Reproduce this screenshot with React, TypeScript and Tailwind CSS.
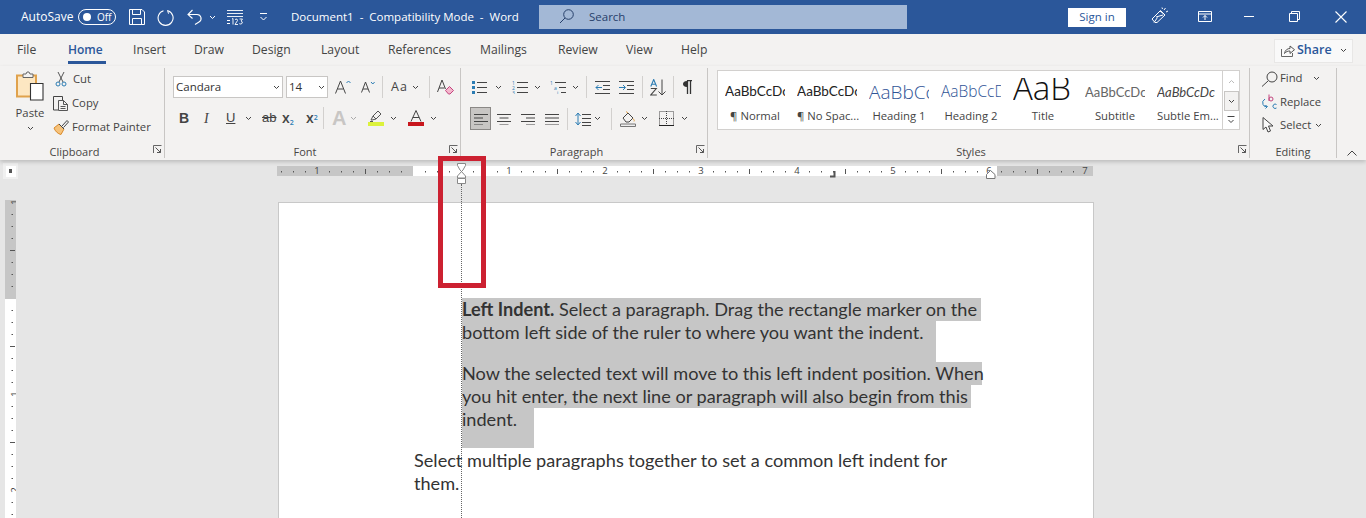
import React from "react";

const ui = "font-['Open_Sans','Noto_Sans',sans-serif]";

function Ico({ w, h, className = "", children }: { w: number; h: number; className?: string; children?: React.ReactNode }) {
  return (
    <svg width={w} height={h} viewBox={`0 0 ${w} ${h}`} fill="none" className={`shrink-0 block ${className}`}>
      {children}
    </svg>
  );
}

function Chev({ className = "", color = "#444" }: { className?: string; color?: string }) {
  return (
    <Ico w={7} h={5} className={className}>
      <path d="M1 1l2.500 2.500L6 1" stroke={color} strokeWidth="1" />
    </Ico>
  );
}

function Sep({ className = "" }: { className?: string }) {
  return <div className={`w-px h-[22px] bg-[#d2d0ce] shrink-0 ${className}`} />;
}

function Launcher() {
  return (
    <div className="w-[15px] flex justify-start pl-[4px] pt-[1px]">
      <Ico w={9} h={9}>
        <path d="M0.500 8V0.500H8.500" stroke="#666" />
        <path d="M2.500 2.500L7.500 7.500M7.500 4v3.500H4" stroke="#555" />
      </Ico>
    </div>
  );
}

function GroupLabel({ text, launcher = true }: { text: string; launcher?: boolean }) {
  return (
    <div className="flex h-[16px] items-start">
      <div className="flex-1 text-center text-[11px] leading-[16px] text-[#484644]">{text}</div>
      {launcher && <Launcher />}
    </div>
  );
}

function Lines({ x = 0, ys, w, color = "#444" }: { x?: number; ys: number[]; w: number; color?: string }) {
  return (
    <>
      {ys.map((y) => (
        <path key={y} d={`M${x} ${y + 0.5}h${w}`} stroke={color} />
      ))}
    </>
  );
}

const tabs: [string, string][] = [
  ["File", "w-[51px]"],
  ["Home", "w-[65px]"],
  ["Insert", "w-[61px]"],
  ["Draw", "w-[58px]"],
  ["Design", "w-[69px]"],
  ["Layout", "w-[67px]"],
  ["References", "w-[92px]"],
  ["Mailings", "w-[78px]"],
  ["Review", "w-[68px]"],
  ["View", "w-[55px]"],
  ["Help", "w-[40px]"],
];

const lato = "font-['Lato',sans-serif]";
const styleCells = [
  { p: "AaBbCcDc", l: "¶ Normal", c: `text-[13.500px] text-[#222] ${lato}` },
  { p: "AaBbCcDc", l: "¶ No Spac...", c: `text-[13.500px] text-[#222] ${lato}` },
  { p: "AaBbCc", l: "Heading 1", c: "text-[19px] text-[#2f5496] font-light" },
  { p: "AaBbCcD", l: "Heading 2", c: "text-[15.500px] text-[#2f5496] font-light" },
  { p: "AaB", l: "Title", c: "text-[33px] text-[#111] font-light pb-[10px]" },
  { p: "AaBbCcDc", l: "Subtitle", c: `text-[13px] text-[#666] ${lato}` },
  { p: "AaBbCcDc", l: "Subtle Em...", c: `text-[13px] italic text-[#444] ${lato}` },
];

function HRuler() {
  const items: React.ReactNode[] = [];
  for (let k = -11; k <= 56; k++) {
    const x = 136 + k * 12;
    if (k === 0) continue;
    if (k % 8 === 0) {
      items.push(
        <text key={k} x={x} y={8} fontSize="9.500" fill="#444" textAnchor="middle" fontFamily="Open Sans">
          {Math.abs(k / 8)}
        </text>
      );
    } else if (k % 4 === 0) {
      items.push(<path key={k} d={`M${x + 0.5} 3v5`} stroke="#555" />);
    } else {
      items.push(<rect key={k} x={x} y={5} width={1} height={1.5} fill="#555" />);
    }
  }
  return (
    <svg width={816} height={10} className="absolute left-0 top-0 block">
      {items}
    </svg>
  );
}

function VRuler() {
  const items: React.ReactNode[] = [];
  for (let k = -8; k <= 18; k++) {
    const y = 98 + k * 12;
    if (k === 0) continue;
    if (k % 8 === 0) {
      items.push(
        <text key={k} x={0} y={0} fontSize="9.500" fill="#444" textAnchor="middle" fontFamily="Open Sans" transform={`translate(10 ${y}) rotate(-90) translate(0 3)`}>
          {Math.abs(k / 8)}
        </text>
      );
    } else if (k % 4 === 0) {
      items.push(<path key={k} d={`M5 ${y + 0.5}h5`} stroke="#555" />);
    } else {
      items.push(<rect key={k} x={6.5} y={y} width={1.5} height={1} fill="#555" />);
    }
  }
  return (
    <svg width={11} height={318} className="absolute left-0 top-0 block">
      {items}
    </svg>
  );
}

function Title() {
  return (
    <div className="h-[34px] bg-[#2b579a] flex items-center text-white shrink-0">
      <span className="ml-[21px] w-[50px] text-[12px] whitespace-nowrap">AutoSave</span>
      <div className="ml-[7px] w-[38px] h-[16px] rounded-full border border-white flex items-center shrink-0">
        <div className="ml-[4px] w-[8px] h-[8px] rounded-full bg-white" />
        <span className="ml-[6px] text-[10px] leading-none">Off</span>
      </div>
      <Ico w={16} h={16} className="ml-[13px]">
        <path d="M0.500 0.500h12.500l2.500 2.500v12.500h-15z M3.500 0.500v5h8v-5 M3.500 15.500v-6h9v6" stroke="#fff" />
      </Ico>
      <Ico w={17} h={17} className="ml-[12px]">
        <path d="M6.500 1.700A7.500 7.500 0 1 0 11 1.800" stroke="#fff" strokeWidth="1.100" />
        <path d="M10.500 1.200l1 3.500" stroke="#fff" />
      </Ico>
      <Ico w={16} h={16} className="ml-[13px]">
        <path d="M5.500 1L1 5.500 5.500 9.500M1.500 5.500H10a4 4 0 0 1 2 7.500L8 15.500" stroke="#fff" strokeWidth="1.100" />
      </Ico>
      <Chev className="ml-[6px]" color="#fff" />
      <Ico w={16} h={15} className="ml-[11px]">
        <path d="M0 0.500h16M0 3.500h16M0 6.500h16" stroke="#fff" strokeWidth="0.900" />
        <path d="M0 10.500h3M0 13.500h3" stroke="#fff" />
        <path d="M5 9l1 -0.500v6M8 9.500q2.500-1.500 2.500 1L8 14.500h3M12.500 9h3l-1.500 2q1.800 .5 1.200 2.200-1 1.500-2.900.5" stroke="#fff" strokeWidth="0.900" />
      </Ico>
      <Ico w={9} h={8} className="ml-[16px]">
        <path d="M1 0.500h7M1.500 4L4.500 7 7.500 4" stroke="#fff" />
      </Ico>
      <span className="ml-[23px] w-[248px] text-[11.500px] whitespace-nowrap">Document1 &nbsp;-&nbsp; Compatibility Mode &nbsp;-&nbsp; Word</span>
      <div className="w-[368px] h-[24px] bg-[#a3b8d6] flex items-center shrink-0 mb-[1px]">
        <Ico w={15} h={15} className="ml-[20px]">
          <circle cx="9.500" cy="5.500" r="4.800" stroke="#27406a" />
          <path d="M6 9L1 14" stroke="#27406a" />
        </Ico>
        <span className="ml-[15px] text-[11.500px] text-[#27406a]">Search</span>
      </div>
      <div className="ml-[161px] w-[58px] h-[19px] bg-white text-[#2b579a] text-[11.500px] flex items-center justify-center shrink-0">Sign in</div>
      <Ico w={17} h={18} className="ml-[25px] mb-[2px]">
        <path d="M1 12L9.500 3.500 14 8l-8 7.500H4z M6.500 10.500L3 15.500" stroke="#fff" />
        <path d="M5 10L12 8 M9 4l5 4" stroke="#fff" />
        <path d="M13 3l1.500-2M15 5l2-1M11.500 2L11 0.500" stroke="#fff" />
      </Ico>
      <Ico w={14} h={11} className="ml-[30px] mb-[1px]">
        <path d="M0.500 0.500h13v10h-13zM0.500 3h13" stroke="#fff" />
        <path d="M7 9V4.500M5 6.500l2-2 2 2" stroke="#fff" />
      </Ico>
      <div className="ml-[32px] w-[10px] h-px bg-white mb-[2px] shrink-0" />
      <Ico w={11} h={11} className="ml-[35px] mb-[1px]">
        <path d="M0.500 2.500h8v8h-8zM2.500 2.500v-2h8v8h-2" stroke="#fff" />
      </Ico>
      <Ico w={12} h={12} className="ml-[35px] mb-[1px]">
        <path d="M0.500 0.500l11 11M11.500 0.500l-11 11" stroke="#fff" strokeWidth="1.100" />
      </Ico>
    </div>
  );
}

function Tabs() {
  return (
    <div className="h-[32px] flex items-center bg-[#f3f2f1] shrink-0 text-[12.200px] text-[#444]">
      <div className="ml-[17px] flex">
        {tabs.map(([t, w]) =>
          t === "Home" ? (
            <div key={t} className={`${w} relative font-semibold text-[#2b579a] text-[12px]`}>
              Home
              <div className="absolute left-0 top-[20px] w-[38px] h-[3px] bg-[#2b579a]" />
            </div>
          ) : (
            <div key={t} className={w}>
              {t}
            </div>
          )
        )}
      </div>
      <div className="ml-[553px] w-[79px] h-[24px] bg-[#f9f9f9] border border-[#e8e7e6] flex items-center shrink-0 mt-[1px]">
        <Ico w={14} h={13} className="ml-[6px]">
          <path d="M0.500 5v7.500h11V9" stroke="#666" />
          <path d="M3.500 9.500C4 6 6.500 4.500 9 4.500V2l4.500 3.700L9 9.500V7C7 7 5 7.500 3.500 9.500z" stroke="#555" />
        </Ico>
        <span className="ml-[2px] text-[12.500px] font-semibold text-[#2b579a] w-[36px]">Share</span>
        <Chev className="ml-[7px]" />
      </div>
    </div>
  );
}

function Clipboard() {
  return (
    <div className="w-[165px] border-r border-[#c8c6c4] flex flex-col shrink-0 my-[2px] h-[90px]">
      <div className="h-[74px] flex">
        <div className="ml-[15px] w-[30px] flex flex-col items-center pt-[3px]">
          <Ico w={28} h={30}>
            <path d="M1 4.500h19v21H1z" fill="#fde7c2" stroke="#e0a24c" strokeWidth="2" />
            <path d="M7 5V3h3l1-2h2l1 2h3v3.500H7z" fill="#f3f2f1" stroke="#666" />
            <path d="M14.500 12.500h12.500v16.500H14.500z" fill="#fff" stroke="#333" strokeWidth="1.100" />
          </Ico>
          <span className="text-[11.300px] leading-[15px] mt-[4px] text-[#444]">Paste</span>
          <Chev className="mt-[6px]" />
        </div>
        <div className="ml-[8px] -mt-[1px] flex flex-col text-[11.300px] text-[#444]">
          <div className="h-[24px] flex items-center">
            <Ico w={12} h={16} className="ml-[2px]">
              <path d="M3 1l5 10M9 1L4 11" stroke="#555" />
              <circle cx="3" cy="13" r="2" stroke="#2b7cb3" />
              <circle cx="9" cy="13" r="2" stroke="#2b7cb3" />
            </Ico>
            <span className="ml-[6px]">Cut</span>
          </div>
          <div className="h-[24px] flex items-center">
            <Ico w={16} h={15}>
              <path d="M5 14H0.500V0.500H9.500V4" stroke="#444" />
              <path d="M5.500 4.500h5l4 4v6h-9zM10.500 4.500v4h4M7.500 10.500h5M7.500 12.500h5" stroke="#444" strokeWidth="0.900" />
            </Ico>
            <span className="ml-[3px]">Copy</span>
          </div>
          <div className="h-[24px] flex items-center">
            <Ico w={16} h={16}>
              <path d="M1 9L6 5l5 5-3 5.500C5 15 2 12 1 9z" fill="#f6c27a" stroke="#d98a2b" />
              <path d="M9 7l5-5.500 1.500 1.500-5 5.500" stroke="#444" />
              <path d="M6 5l5 5" stroke="#444" />
            </Ico>
            <span className="ml-[3px] whitespace-nowrap">Format Painter</span>
          </div>
        </div>
      </div>
      <div className="mt-auto mb-[-2px]">
        <GroupLabel text="Clipboard" />
      </div>
    </div>
  );
}

function Font() {
  return (
    <div className="w-[296px] border-r border-[#c8c6c4] flex flex-col shrink-0 my-[2px] h-[90px]">
      <div className="flex items-center mt-[8px] h-[22px]">
        <div className="ml-[8px] w-[110px] h-[22px] bg-white border border-[#c8c6c4] flex items-center justify-between px-[2px] shrink-0">
          <span className="text-[11.500px] text-[#333]">Candara</span>
          <Chev />
        </div>
        <div className="ml-[3px] w-[42px] h-[22px] bg-white border border-[#c8c6c4] flex items-center justify-between px-[2px] shrink-0">
          <span className="text-[11.500px] text-[#333]">14</span>
          <Chev />
        </div>
        <Ico w={16} h={14} className="ml-[7px]">
          <path d="M0.500 13.500L5.500 1l5 12.500M2.500 9h6" stroke="#444" />
          <path d="M11.500 3l2-2 2 2" stroke="#2b7cb3" />
        </Ico>
        <Ico w={14} h={12} className="ml-[10px]">
          <path d="M0.500 11.500L4.500 1l4 10.500M2 8h5" stroke="#444" />
          <path d="M10 1l1.800 2 1.800-2" stroke="#2b7cb3" />
        </Ico>
        <Sep className="ml-[7px]" />
        <span className="ml-[8px] text-[12.500px] tracking-[1px] text-[#444] w-[18px]">Aa</span>
        <Chev className="ml-[3px]" />
        <Sep className="ml-[10px]" />
        <Ico w={17} h={16} className="ml-[7px]">
          <path d="M0.500 13L5 1l3.500 9M2 9h5.500" stroke="#444" />
          <path d="M8.500 11.500L12.500 7.500l4 4-3.500 3.500h-1.500z" fill="#f4b6cc" stroke="#c2457e" />
        </Ico>
      </div>
      <div className="flex items-center mt-[9px] h-[22px] text-[#444]">
        <span className="ml-[14px] w-[10px] text-[14px] font-bold font-['Liberation_Sans',sans-serif]">B</span>
        <span className="ml-[15px] w-[9px] text-[14px] italic font-['Liberation_Serif',serif]">I</span>
        <span className="ml-[13px] w-[10px] text-[13px] underline font-['Liberation_Sans',sans-serif]">U</span>
        <Chev className="ml-[9px]" />
        <span className="ml-[10px] w-[16px] text-[13px] line-through font-['Liberation_Sans',sans-serif]">ab</span>
        <span className="ml-[4px] w-[15px] text-[14px] font-semibold whitespace-nowrap leading-none">
          x<sub className="text-[#2b7cb3] text-[7px]">2</sub>
        </span>
        <span className="ml-[9px] w-[15px] text-[14px] font-semibold whitespace-nowrap leading-none">
          x<sup className="text-[#2b7cb3] text-[7px]">2</sup>
        </span>
        <Sep className="ml-[2px]" />
        <span className="ml-[8px] w-[15px] text-[20px] font-bold leading-none text-[#c8c6c4] font-['Liberation_Sans',sans-serif]">A</span>
        <Chev className="ml-[3px]" color="#aaa" />
        <div className="ml-[11px] w-[16px] flex flex-col items-center shrink-0">
          <Ico w={14} h={11}>
            <path d="M2 9l2-4 5-5 3 3-5 5-4 1zM4 5l3 3" stroke="#555" />
            <path d="M1 10.500h3" stroke="#555" />
          </Ico>
          <div className="w-[16px] h-[4px] bg-[#dcf23c]" />
        </div>
        <Chev className="ml-[6px]" />
        <div className="ml-[11px] w-[16px] flex flex-col items-center shrink-0">
          <Ico w={12} h={12}>
            <path d="M1 11.500L6 0.500l5 11M2.800 7.500h6.400" stroke="#444" />
          </Ico>
          <div className="w-[16px] h-[4px] bg-[#c8161d]" />
        </div>
        <Chev className="ml-[6px]" />
      </div>
      <div className="mt-auto mb-[-2px]">
        <GroupLabel text="Font" />
      </div>
    </div>
  );
}

function Paragraph() {
  const al = (ys: [number, number][]) => ys.map(([a, w], i) => <path key={i} d={`M${a} ${1.5 + i * 3.5}h${w}`} stroke="#444" />);
  return (
    <div className="w-[247px] border-r border-[#c8c6c4] flex flex-col shrink-0 my-[2px] h-[90px]">
      <div className="flex items-center mt-[8px] h-[22px]">
        <Ico w={16} h={14} className="ml-[11px]">
          <rect x="0" y="1" width="3" height="3" fill="#2b7cb3" />
          <rect x="0" y="6" width="3" height="3" fill="#2b7cb3" />
          <rect x="0" y="11" width="3" height="3" fill="#2b7cb3" />
          <Lines x={5} ys={[2, 7, 12]} w={10} />
        </Ico>
        <Chev className="ml-[7px]" />
        <Ico w={16} h={14} className="ml-[10px]">
          <text x="0" y="5" fontSize="5" fill="#2b7cb3" fontFamily="Open Sans">1</text>
          <text x="0" y="10" fontSize="5" fill="#2b7cb3" fontFamily="Open Sans">2</text>
          <text x="0" y="14.500" fontSize="5" fill="#2b7cb3" fontFamily="Open Sans">3</text>
          <Lines x={5} ys={[2, 7, 12]} w={11} />
        </Ico>
        <Chev className="ml-[6px]" />
        <Ico w={17} h={14} className="ml-[9px]">
          <text x="0" y="5" fontSize="5" fill="#2b7cb3" fontFamily="Open Sans">1</text>
          <text x="4" y="10" fontSize="5" fill="#2b7cb3" fontFamily="Open Sans">a</text>
          <text x="7" y="14.500" fontSize="5" fill="#2b7cb3" fontFamily="Open Sans">i</text>
          <Lines x={5} ys={[2]} w={11} />
          <Lines x={9} ys={[7]} w={7} />
          <Lines x={11} ys={[12]} w={5} />
        </Ico>
        <Chev className="ml-[5px]" />
        <Sep className="ml-[7px]" />
        <Ico w={15} h={14} className="ml-[8px]">
          <Lines x={0} ys={[1, 13]} w={15} />
          <Lines x={8} ys={[5, 9]} w={7} />
          <path d="M7 7.500H1M3.500 5L1 7.500 3.500 10" stroke="#2b7cb3" />
        </Ico>
        <Ico w={15} h={14} className="ml-[9px]">
          <Lines x={0} ys={[1, 13]} w={15} />
          <Lines x={8} ys={[5, 9]} w={7} />
          <path d="M0 7.500h6M4 5l2.500 2.500L4 10" stroke="#2b7cb3" />
        </Ico>
        <Sep className="ml-[8px]" />
        <Ico w={17} h={17} className="ml-[7px]">
          <path d="M0.800 7.500L3.700 0.500l2.900 7M1.800 5.200h3.800" stroke="#2b7cb3" strokeWidth="1.100" />
          <path d="M0.800 9.500h5.500l-5.500 6.500h6" stroke="#444" strokeWidth="1.100" />
          <path d="M12 0.500v15.500M8.500 12.500l3.500 3.500 3.500-3.500" stroke="#444" />
        </Ico>
        <Sep className="ml-[6px]" />
        <Ico w={9} h={14} className="ml-[9px]">
          <path d="M4 0.500h5M4.500 0.500V14M7.500 0.500V14" stroke="#333" strokeWidth="1.300" />
          <path d="M4 1C1 1 0 2.500 0 4s1 3 4 3z" fill="#333" />
        </Ico>
      </div>
      <div className="flex items-center mt-[9px] h-[23px]">
        <div className="ml-[9px] w-[21px] h-[23px] bg-[#c8c6c4] border border-[#8a8886] flex items-center justify-center shrink-0">
          <Ico w={14} h={12}>{al([[0, 14], [0, 9], [0, 14], [0, 9]])}</Ico>
        </div>
        <Ico w={14} h={12} className="ml-[6px]">{al([[0, 14], [2.5, 9], [0, 14], [2.5, 9]])}</Ico>
        <Ico w={14} h={12} className="ml-[10px]">{al([[0, 14], [5, 9], [0, 14], [5, 9]])}</Ico>
        <Ico w={14} h={12} className="ml-[10px]">{al([[0, 14], [0, 14], [0, 14], [0, 14]])}</Ico>
        <Sep className="ml-[8px]" />
        <Ico w={16} h={14} className="ml-[7px]">
          <path d="M3 2v10M0.500 4L3 1l2.500 3M0.500 10L3 13l2.500-3" stroke="#2b7cb3" />
          <Lines x={7} ys={[2, 6, 10, 13]} w={9} />
        </Ico>
        <Chev className="ml-[3px]" />
        <Sep className="ml-[10px]" />
        <Ico w={16} h={16} className="ml-[8px]">
          <path d="M3 7l5-5 5 5-4 4H6z" stroke="#444" />
          <path d="M8 2L6 0.500M13 7.500q2 2 1 3" stroke="#e0a24c" />
          <path d="M0.500 13h15v2.500H0.500z" stroke="#777" fill="#eee" />
        </Ico>
        <Chev className="ml-[5px]" />
        <Ico w={15} h={15} className="ml-[11px]">
          <path d="M0.500 0.500h14v14H0.500z" stroke="#444" strokeDasharray="1 1" />
          <path d="M7.500 0v15M0 7.500h15" stroke="#444" strokeDasharray="1 1" />
          <path d="M0 14.500h15" stroke="#222" />
        </Ico>
        <Chev className="ml-[7px]" />
      </div>
      <div className="mt-auto mb-[-2px]">
        <GroupLabel text="Paragraph" />
      </div>
    </div>
  );
}

function Styles() {
  return (
    <div className="w-[542px] border-r border-[#c8c6c4] flex flex-col shrink-0 my-[2px] h-[90px]">
      <div className="ml-[9px] mt-[2px] w-[523px] h-[60px] flex shrink-0">
        <div className="w-[506px] bg-white border border-[#d2d0ce] flex pl-[7px]">
          {styleCells.map((s) => (
            <div key={s.l} className="w-[72px] shrink-0 flex flex-col">
              <div className={`w-[60px] h-[28px] mt-[7px] overflow-hidden whitespace-nowrap flex items-center leading-none ${s.c}`}>{s.p}</div>
              <div className="w-[60px] text-center text-[11.300px] leading-[15px] mt-[2px] text-[#444] whitespace-nowrap">{s.l}</div>
            </div>
          ))}
        </div>
        <div className="w-[17px] flex flex-col border border-l-0 border-[#d2d0ce] bg-white items-center">
          <div className="w-[15px] h-[20px] flex items-center justify-center">
            <Ico w={7} h={5}><path d="M1 4l2.500-2.500L6 4" stroke="#bbb" /></Ico>
          </div>
          <div className="w-[15px] h-[20px] flex items-center justify-center bg-[#f3f2f1] border border-[#c8c6c4]">
            <Chev />
          </div>
          <div className="w-[15px] flex-1 flex items-center justify-center">
            <Ico w={8} h={8}><path d="M0.500 0.500h7M1.500 4l2.500 2.500L6.500 4" stroke="#444" /></Ico>
          </div>
        </div>
      </div>
      <div className="mt-auto mb-[-2px]">
        <GroupLabel text="Styles" />
      </div>
    </div>
  );
}

function Editing() {
  return (
    <div className="w-[87px] border-r border-[#c8c6c4] flex flex-col shrink-0 my-[2px] h-[90px] text-[11.300px] text-[#444]">
      <div className="h-[23px] -mt-[1px] flex items-center">
        <Ico w={18} h={16} className="ml-[11px]">
          <circle cx="11" cy="6" r="5" stroke="#444" />
          <path d="M7 10l-6 5.500" stroke="#444" />
        </Ico>
        <span className="w-[25px] ml-[1px]">Find</span>
        <Chev className="ml-[8px]" />
      </div>
      <div className="h-[24px] flex items-center">
        <Ico w={16} h={17} className="ml-[11px]">
          <path d="M4 5q-3.500 2-2 5.500T6 12" stroke="#2b7cb3" />
          <path d="M3.500 11.500l3 1-2 2" stroke="#2b7cb3" />
          <path d="M8 0.500v6.500M8 5a2 2 0 1 1 4 0 2 2 0 1 1-4 0" stroke="#c2457e" />
          <path d="M15.500 10.500a2.200 2.200 0 1 0 0 3.500" stroke="#2b7cb3" />
        </Ico>
        <span className="ml-[3px]">Replace</span>
      </div>
      <div className="h-[22px] flex items-center">
        <Ico w={13} h={16} className="ml-[12px]">
          <path d="M1 0.500V12.500l3-2.500 2 5 2.500-1-2-5h4.500z" stroke="#444" fill="#f9f9f9" />
        </Ico>
        <span className="ml-[5px] w-[33px]">Select</span>
        <Chev className="ml-[2px]" />
      </div>
      <div className="mt-auto mb-[-2px]">
        <GroupLabel text="Editing" launcher={false} />
      </div>
    </div>
  );
}

function Ribbon() {
  return (
    <div className="h-[94px] flex bg-[#f3f2f1] shrink-0 relative z-10 shadow-[0_2px_4px_rgba(0,0,0,0.18)]">
      <Clipboard />
      <Font />
      <Paragraph />
      <Styles />
      <Editing />
      <div className="flex-1 flex items-end justify-end pr-[9px] pb-[4px]">
        <Ico w={10} h={6}><path d="M0.500 5.500L5 1l4.500 4.500" stroke="#444" /></Ico>
      </div>
    </div>
  );
}

function Doc() {
  const sel = "ml-[48px] bg-[#c6c6c6]";
  return (
    <div className="flex-1 bg-[#e6e6e6] flex flex-col min-h-0 overflow-hidden">
      <div className="h-[40px] flex items-start shrink-0">
        <div className="ml-[3px] mt-[3px] w-[15px] h-[16px] bg-[#f0f0f0] flex items-center justify-center shrink-0">
          <div className="w-[10px] h-[11px] bg-white flex items-center justify-center">
            <div className="w-[3px] h-[4px] bg-[#555]" />
          </div>
        </div>
        <div className="ml-[259px] mt-[6px] w-[816px] h-[10px] flex relative shrink-0">
          <div className="w-[136px] bg-[#c6c6c6]" />
          <div className="w-[584px] bg-white" />
          <div className="flex-1 bg-[#c6c6c6]" />
          <HRuler />
        </div>
      </div>
      <div className="flex-1 flex min-h-0">
        <div className="ml-[5px] w-[11px] flex flex-col relative shrink-0">
          <div className="h-[99px] bg-[#c6c6c6] shrink-0" />
          <div className="flex-1 bg-white" />
          <VRuler />
        </div>
        <div className="ml-[262px] mt-[2px] w-[816px] bg-white border border-b-0 border-[#c8c8c8] shrink-0 pl-[135px] pt-[95px] text-[18.140px] leading-[23px] text-[#333] font-['Lato',sans-serif] whitespace-nowrap">
          <div className={`${sel} w-[519px] h-[23px]`}>
            <b>Left Indent.</b> Select a paragraph. Drag the rectangle marker on the
          </div>
          <div className={`${sel} w-[474px] h-[41px]`}>bottom left side of the ruler to where you want the indent.</div>
          <div className={`${sel} w-[520px] h-[23px]`}>Now the selected text will move to this left indent position. When</div>
          <div className={`${sel} w-[509px] h-[23px]`}>you hit enter, the next line or paragraph will also begin from this</div>
          <div className={`${sel} w-[72px] h-[40px]`}>indent.</div>
          <div className="mt-[1px]">Select multiple paragraphs together to set a common left indent for</div>
          <div>them.</div>
        </div>
      </div>
    </div>
  );
}

export default function App() {
  return (
    <div className={`w-[1366px] h-[518px] overflow-hidden flex flex-col relative bg-[#e6e6e6] ${ui}`}>
      <Title />
      <Tabs />
      <Ribbon />
      <Doc />
      <div className="absolute z-20 left-[461px] top-[184px] bottom-0 w-0 border-l border-dotted border-[#666]" />
      <div className="absolute z-20 left-[438px] top-[156px] w-[48px] h-[132px] border-[5px] border-[#cc2131]" />
      <Ico w={11} h={22} className="absolute z-20 left-[456px] top-[163px]">
        <path d="M1.500 0.500h8v2L7 7l-1.500 1.500L4 7 1.500 2.500zM5.500 8.500L9.500 13v2H1.500v-2z" fill="#fff" stroke="#888" />
        <path d="M1.500 15.500h8v5h-8z" fill="#fff" stroke="#888" />
      </Ico>
      <Ico w={8} h={7} className="absolute z-20 left-[830px] top-[171px]">
        <path d="M4.500 0v5.500H0" stroke="#555" strokeWidth="2" />
      </Ico>
      <Ico w={10} h={9} className="absolute z-20 left-[986px] top-[170px]">
        <path d="M4.500 0.500L9 4.500v4H0.500v-4z" fill="#fff" stroke="#777" />
      </Ico>
    </div>
  );
}
